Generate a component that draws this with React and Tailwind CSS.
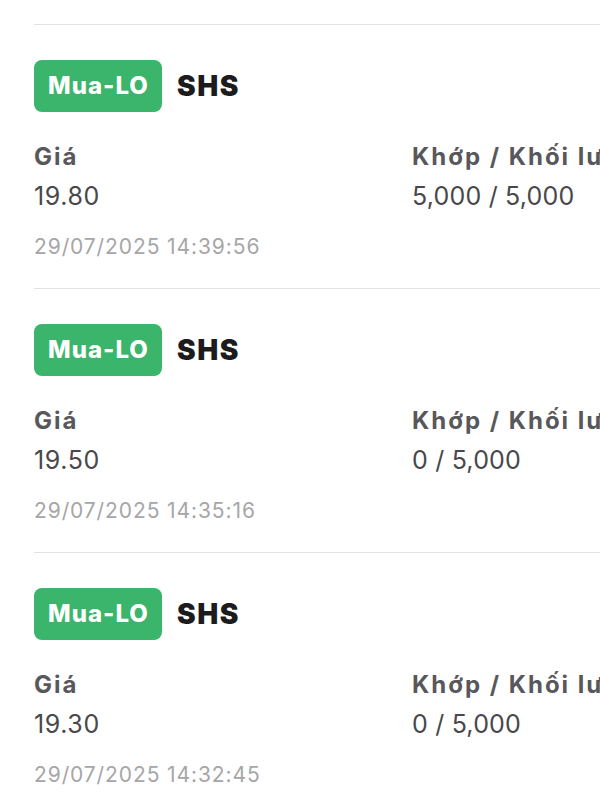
import React from "react";

const items = [
  { price: "19.80", match: "5,000 / 5,000", time: "29/07/2025 14:39:56" },
  { price: "19.50", match: "0 / 5,000", time: "29/07/2025 14:35:16" },
  { price: "19.30", match: "0 / 5,000", time: "29/07/2025 14:32:45" },
];

export default function App() {
  return (
    <div
      className="w-[600px] h-[800px] overflow-hidden bg-white pl-[34px] pt-[24px]"
      style={{ fontFamily: "Inter, 'Noto Sans', sans-serif" }}
    >
      {items.map((it, i) => (
        <div key={i} className="w-[700px] border-t border-[#e2e2e4] pt-[35px] h-[264px]">
          <div className="flex items-center gap-[15px]">
            <div className="w-[128px] h-[52px] rounded-[8px] bg-[#3bb56c] flex items-center justify-center pl-[1px] text-white font-extrabold text-[24px] tracking-[1px]">
              Mua-LO
            </div>
            <div className="text-[#1c1c1e] font-black text-[28px] tracking-[1.5px]">SHS</div>
          </div>
          <div className="flex mt-[30px]">
            <div className="w-[378px]">
              <div className="text-[#58585c] font-bold text-[24px] leading-[30px] tracking-[2px]">Giá</div>
              <div className="text-[#48484c] text-[25px] leading-[34px] mt-[7px] tracking-[0.6px]">{it.price}</div>
            </div>
            <div>
              <div className="text-[#58585c] font-bold text-[24px] leading-[30px] tracking-[2px] whitespace-nowrap">Khớp / Khối lượng</div>
              <div className="text-[#48484c] text-[25px] leading-[34px] mt-[7px] tracking-[0.2px]">{it.match}</div>
            </div>
          </div>
          <div className="text-[#a6a6a8] text-[21px] leading-[26px] mt-[21px] tracking-[0.9px]">{it.time}</div>
        </div>
      ))}
    </div>
  );
}
